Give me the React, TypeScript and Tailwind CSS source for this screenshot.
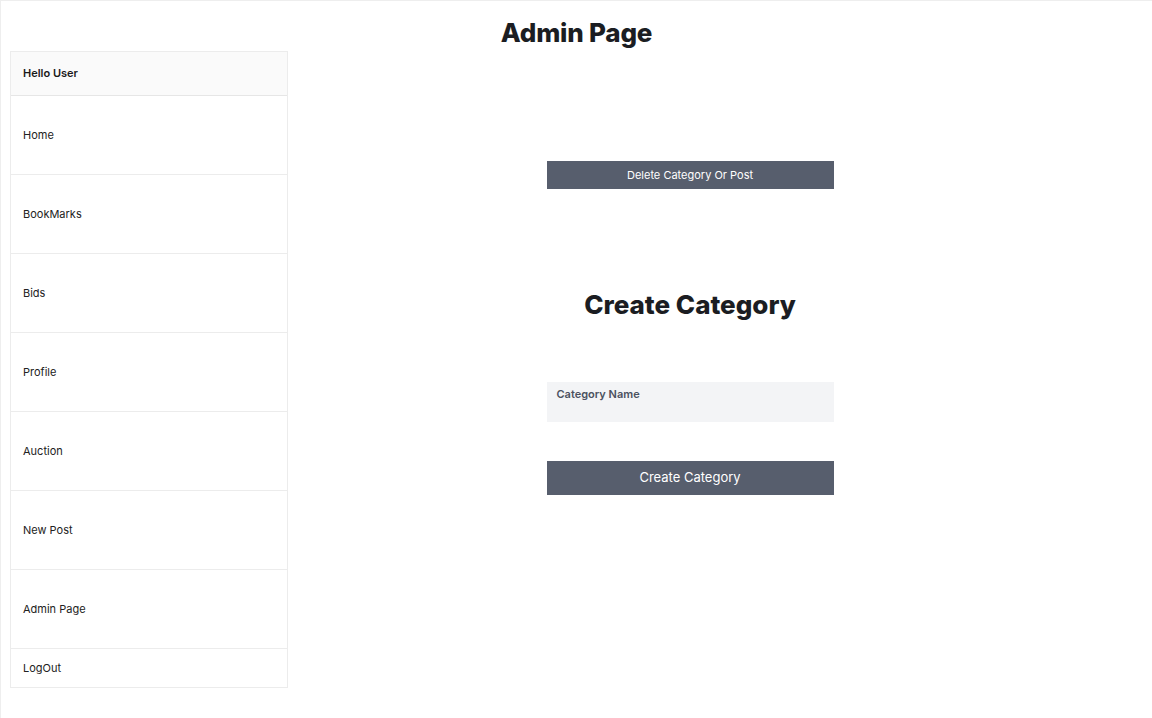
import React from "react";

const links = ["Home", "BookMarks", "Bids", "Profile", "Auction", "New Post", "Admin Page"];

function Sidebar() {
  return (
    <div className="w-[278px] shrink-0 border border-[#ececec] bg-white">
      <div className="h-[44px] flex items-center px-3 bg-[#fafafa] border-b border-[#e6e6e6] text-[11px] font-semibold text-[#1a1a1a]">
        Hello User
      </div>
      {links.map((l) => (
        <div
          key={l}
          className="h-[79px] flex items-center px-3 border-b border-[#ececec] text-[11px] text-[#222]"
        >
          {l}
        </div>
      ))}
      <div className="h-[38px] flex items-center px-3 text-[11px] text-[#222]">LogOut</div>
    </div>
  );
}

export default function App() {
  return (
    <div
      className="min-h-[718px] w-full border-t border-l border-[#eeeeee] bg-white"
      style={{ fontFamily: "Inter, 'Noto Sans', sans-serif" }}
    >
      <h1 className="h-[50px] pt-[12px] flex items-center justify-center text-[26px] font-extrabold text-[#1b1d22] tracking-[-0.2px]">
        Admin Page
      </h1>
      <div className="flex pl-[9px]">
        <Sidebar />
        <main className="flex-1 pr-[60px] flex flex-col items-center pt-[110px]">
          <button className="w-[287px] h-[28px] bg-[#575e6d] text-white text-[11px]">
            Delete Category Or Post
          </button>
          <h2 className="mt-[96px] text-[26px] font-extrabold text-[#1b1d22]">Create Category</h2>
          <div className="mt-[58px] w-[287px] h-[40px] bg-[#f3f4f6] px-[10px] pt-[4px] text-[11px] font-semibold text-[#4b5160]">
            Category Name
          </div>
          <button className="mt-[39px] w-[287px] h-[34px] bg-[#575e6d] text-white text-[13px]">
            Create Category
          </button>
        </main>
      </div>
    </div>
  );
}
